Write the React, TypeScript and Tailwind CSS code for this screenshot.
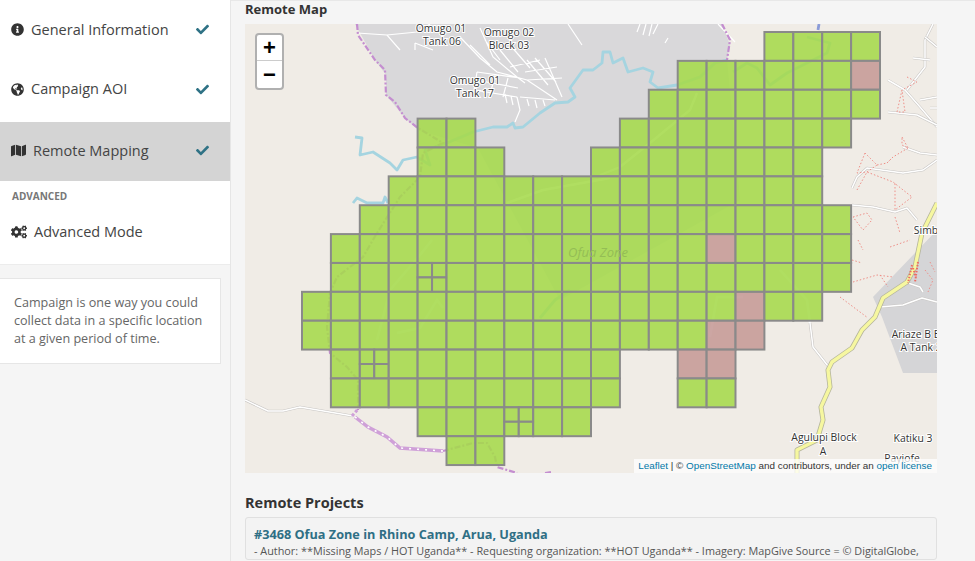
import React from 'react';
import { FaInfoCircle, FaGlobeAmericas, FaMap, FaCogs, FaCheck } from 'react-icons/fa';

// [row, first col, last col] of the task squares
const gridRows: number[][] = [
  [0, 16, 19],
  [1, 13, 19],
  [2, 12, 19],
  [3, 4, 5],
  [3, 11, 18],
  [4, 4, 6],
  [4, 10, 17],
  [5, 3, 17],
  [6, 2, 18],
  [7, 1, 18],
  [8, 1, 18],
  [9, 0, 17],
  [10, 0, 15],
  [11, 1, 10],
  [11, 13, 14],
  [12, 1, 10],
  [12, 13, 14],
  [13, 4, 9],
  [14, 5, 6],
];

const pinkCells = ['1-19', '7-14', '9-15', '10-14', '10-15', '11-13', '11-14'];
const splitCells = ['8-4', '11-2', '13-7'];

const CELL_W = 28.9;
const CELL_H = 28.87;
const GREEN = '#a5d94b';
const PINK = '#c59a96';

const buildCells = () => {
  const cells: { x: number; y: number; w: number; h: number; fill: string }[] = [];
  gridRows.forEach(([r, from, to]) => {
    for (let c = from; c <= to; c++) {
      const key = `${r}-${c}`;
      const x = 302 + c * CELL_W;
      const y = 32 + r * CELL_H;
      const fill = pinkCells.includes(key) ? PINK : GREEN;
      if (splitCells.includes(key)) {
        const w = CELL_W / 2;
        const h = CELL_H / 2;
        cells.push({ x, y, w, h, fill }, { x: x + w, y, w, h, fill }, { x, y: y + h, w, h, fill }, { x: x + w, y: y + h, w, h, fill });
      } else {
        cells.push({ x, y, w: CELL_W, h: CELL_H, fill });
      }
    }
  });
  return cells;
};

const mapLabels = [
  { x: 441, y: 32, t: 'Omugo 01' },
  { x: 442, y: 45, t: 'Tank 06' },
  { x: 509, y: 36, t: 'Omugo 02' },
  { x: 509, y: 49, t: 'Block 03' },
  { x: 475, y: 84, t: 'Omugo 01' },
  { x: 475, y: 97, t: 'Tank 17' },
  { x: 926, y: 234, t: 'Simb' },
  { x: 916, y: 338, t: 'Ariaze B B' },
  { x: 921, y: 351, t: 'A Tank 2' },
  { x: 824, y: 441, t: 'Agulupi Block' },
  { x: 823, y: 455, t: 'A' },
  { x: 913, y: 442, t: 'Katiku 3' },
  { x: 902, y: 462, t: 'Payiofe' },
];

const townRoads = [
  'M357 33L387 35L400 50',
  'M387 35L417 32L430 24',
  'M415 43L433 50M415 43L415 50',
  'M460 37L480 58L497 72L527 80L557 100',
  'M480 28L493 57L517 77L525 83',
  'M470 45L490 65M485 40L500 60',
  'M500 50L518 72M510 45L530 68',
  'M527 60L548 85M535 58L556 82M545 58L562 97',
  'M510 67L540 60M525 72L557 67M527 80L562 78',
  'M477 72L473 97M477 72L520 78M476 80L518 88M474 90L517 97',
  'M495 75L490 95M508 78L503 97',
  'M517 97L520 110L515 122M520 97L555 100',
  'M505 94L507 103M511 96L513 105M527 99L529 106M535 100L537 108M543 100L545 106',
  'M568 24L582 45',
  'M640 24L637 32M646 24L643 35M652 24L649 36M658 24L653 34M668 38L665 43',
  'M718 24L735 42',
];

const footpaths = [
  'M902 90L897 112L905 112L902 90M907 77L917 82L902 90',
  'M902 137L908 148L902 145L902 137M887 163L893 157L908 148',
  'M865 153L857 173L867 172M877 165L887 163L893 157M867 172L877 165L865 153',
  'M857 190L867 172L893 182L912 197L895 210L895 182',
  'M853 217L867 213L872 220L863 230L853 217M895 217L900 233',
  'M853 282L877 275L893 277M880 275L888 287M840 297L868 318',
  'M890 247L910 240M858 240L863 250M852 260L862 263',
  'M925 270L933 280L928 292M930 262L935 272',
];

const mainRoads = [
  'M888 80L905 90L920 107L937 127',
  'M888 112L917 115L937 125',
  'M907 90L925 67L925 40L933 24',
  'M913 58L930 60M925 37L937 47M937 97L920 100M930 108L937 108',
  'M903 147L920 153L937 155',
  'M937 160L923 170L903 173L867 168L857 177L852 188',
  'M852 205L873 207L895 212L907 208L917 220',
  'M810 323L813 347L828 366',
  'M880 307L903 305L922 298L937 302',
  'M908 283L920 287L923 292',
  'M245 400L268 411L283 411L300 407L353 416',
];

const landRoads = [
  'M432 240L420 255L390 290L383 317L377 340',
  'M697 93L690 110L650 143L620 167L600 175',
  'M610 178L543 190L507 203',
  'M397 333L420 328L437 300L443 308',
  'M780 270L807 300L810 323',
  'M710 337L717 297L743 297',
];

const yellowRoad =
  'M937 203L922 233L915 267L907 282L883 298L875 317L862 330L852 348L832 362L828 370L830 387L821 407L823 420L817 440L797 450L797 473';

const App: React.FC = () => {
  const cells = buildCells();

  return (
    <div className="flex h-[561px] w-[975px] overflow-hidden bg-[#f5f5f5] font-['Open_Sans',sans-serif] text-[#444]">
      <aside className="w-[231px] shrink-0 border-r border-[#e6e6e6]">
        <nav className="border-b border-[#ececec] bg-white">
          <a className="flex h-[59px] items-center pl-[11px] pr-[21px]">
            <FaInfoCircle className="w-[13px] text-[13px] text-[#333]" />
            <span className="ml-[7px] flex-1 text-[14.5px]">General Information</span>
            <FaCheck className="text-[13px] text-[#2f7285]" />
          </a>
          <a className="flex h-[63px] items-center pb-[3px] pl-[11px] pr-[21px]">
            <FaGlobeAmericas className="w-[13px] text-[13px] text-[#333]" />
            <span className="ml-[7px] flex-1 text-[14.5px]">Campaign AOI</span>
            <FaCheck className="text-[13px] text-[#2f7285]" />
          </a>
          <a className="flex h-[59px] items-center bg-[#d4d4d4] pb-[2px] pl-[11px] pr-[21px]">
            <FaMap className="w-[15px] text-[15px] text-[#333]" />
            <span className="ml-[7px] flex-1 text-[14.5px]">Remote Mapping</span>
            <FaCheck className="text-[13px] text-[#2f7285]" />
          </a>
          <div className="flex h-[30px] items-center pl-[12px] text-[10px] font-bold text-[#777]">ADVANCED</div>
          <a className="flex h-[53px] items-center pb-[11px] pl-[11px] pr-[21px]">
            <FaCogs className="w-[16px] text-[16px] text-[#333]" />
            <span className="ml-[7px] flex-1 text-[14.5px]">Advanced Mode</span>
          </a>
        </nav>
        <div className="mr-[9px] mt-[13px] h-[86px] border border-l-0 border-[#e6e6e6] bg-white py-[15px] pl-[14px] pr-2 text-[12.6px] leading-[18px] text-[#666]">
          Campaign is one way you could collect data in a specific location at a given period of time.
        </div>
      </aside>

      <main className="min-w-0 flex-1 border-t border-[#e8e8e8] pl-[14px] pr-[38px]">
        <h2 className="flex h-[23px] items-center pb-[7px] text-[13px] font-bold leading-none text-[#333]">Remote Map</h2>

        <div className="relative h-[449px] overflow-hidden bg-[#f0ece6]">
          <svg viewBox="245 24 692 449" className="block h-[449px] w-[692px]">
            <path d="M355 24L375 60L386 75L386 95L405 118L418 130L478 148L560 300L740 200L727 60L730 45L722 24Z" fill="#d9d8da" />
            <path d="M937 230L915 253L873 297L882 317L903 373L937 373Z" fill="#d5d5d7" />

            <path d={landRoads.join('')} fill="none" stroke="#fff" strokeWidth="2.4" />
            {mainRoads.map((d, i) => (
              <g key={i} fill="none" strokeLinejoin="round">
                <path d={d} stroke="#c8c6c4" strokeWidth="2.6" />
                <path d={d} stroke="#fff" strokeWidth="1.5" />
              </g>
            ))}
            <path d={townRoads.join('')} fill="none" stroke="#fff" strokeWidth="1.2" />

            <g fill="none" stroke="#a5d4e0" strokeWidth="2.8" strokeLinejoin="round">
              <path d="M447 143L473 132L493 127L507 127L513 123L515 128L523 127L540 113L555 103L568 102L575 97L570 88L583 70L593 70L602 63L603 52L610 52L613 63L623 58L628 72L643 68L653 72L650 82L658 88L677 85L700 77L715 63L727 60" />
              <path d="M355 137L362 138L360 155L373 152L390 163L397 170L403 160L417 157L430 165L425 150L447 143" />
              <path d="M353 203L357 198L367 203L383 203L385 197L388 203" />
              <path d="M733 72L747 63L757 68L770 85L787 73L813 60L827 53L830 43L807 37" />
              <path d="M818 30L819 24" stroke="#8a9bd8" />
              <path d="M540 318L555 300L570 290" />
            </g>

            <path d={footpaths.join('')} fill="none" stroke="#ee8f88" strokeWidth="1" strokeDasharray="1.5 2" />

            <g fill="none" strokeLinejoin="round">
              <path d={yellowRoad} stroke="#b5b59c" strokeWidth="5" />
              <path d={yellowRoad} stroke="#f6f7a0" strokeWidth="3.4" />
            </g>
            <path d="M912 265L908 283M913 268L916 278M918 262L915 282" fill="none" stroke="#ee6b62" strokeWidth="2" strokeDasharray="1.5 1.5" />

            <g fill="none" stroke="#c48ed0" strokeWidth="2.2" strokeDasharray="6 2 2 2">
              <path d="M357 24L358 35L375 60L385 70L386 95L395 102L405 118L418 128L443 143L423 153L420 177L400 197L377 233L363 257L337 277L330 293L327 327L330 353L347 367L358 380L358 410" />
              <path d="M722 24L730 40L727 60" />
              <path d="M443 451L473 443L487 443L495 457L497 467L517 473M545 473L552 472" />
            </g>
            <path d="M355 417L368 427L387 437L400 448L443 451" fill="none" stroke="#cfa0d8" strokeWidth="3.4" />
            <path d="M355 417L368 427L387 437L400 448L443 451" fill="none" stroke="#fff" strokeWidth="1.6" strokeDasharray="2 6" />
            <path d="M352 416L358 409" fill="none" stroke="#cfa0d8" strokeWidth="3" strokeDasharray="3 2" />

            <g fill="#333" stroke="#fff" strokeWidth="2" paintOrder="stroke" fontSize="10.4" textAnchor="middle" fontFamily="'Open Sans', sans-serif">
              {mapLabels.map((l, i) => (
                <text key={i} x={l.x} y={l.y}>{l.t}</text>
              ))}
            </g>

            <g stroke="#8a8a8a" strokeWidth="2" fillOpacity="0.88">
              {cells.map((c, i) => (
                <rect key={i} x={c.x} y={c.y} width={c.w} height={c.h} fill={c.fill} />
              ))}
            </g>
            <text x="598" y="257" fill="#94bd55" fontSize="13" fontStyle="italic" textAnchor="middle" fontFamily="'Open Sans', sans-serif">Ofua Zone</text>
          </svg>

          <div className="absolute left-[10px] top-[9px] w-[29px] rounded-[4px] border-2 border-[#b0b0b0] bg-white text-black">
            <div className="flex h-[26px] items-center justify-center border-b border-[#ccc] font-['Liberation_Sans',sans-serif] text-[22px] font-bold leading-none">+</div>
            <div className="flex h-[27px] items-center justify-center font-['Liberation_Sans',sans-serif] text-[22px] font-bold leading-none">−</div>
          </div>

          <div className="absolute bottom-0 right-0 flex h-[14px] items-center whitespace-pre bg-white/75 pl-[4px] pr-[5px] font-['Liberation_Sans',sans-serif] text-[9.9px] text-[#333]">
            <span className="text-[#0078a8]">Leaflet</span> | © <span className="text-[#0078a8]">OpenStreetMap</span> and contributors, under an <span className="text-[#0078a8]">open license</span>
          </div>
        </div>

        <h2 className="mt-[20px] text-[14.5px] font-bold leading-[20px] text-[#333]">Remote Projects</h2>
        <div className="mt-[4px] rounded-[3px] border border-[#e0e0e0] bg-[#f3f3f3] px-[8px] pt-[7px]">
          <h3 className="text-[12.7px] font-bold leading-[18px] text-[#2f6f85]">#3468 Ofua Zone in Rhino Camp, Arua, Uganda</h3>
          <p className="whitespace-nowrap text-[10.85px] leading-[16px] text-[#555]">
            - Author: **Missing Maps / HOT Uganda** - Requesting organization: **HOT Uganda** - Imagery: MapGive Source = © DigitalGlobe,
          </p>
        </div>
      </main>
    </div>
  );
};

export default App;
